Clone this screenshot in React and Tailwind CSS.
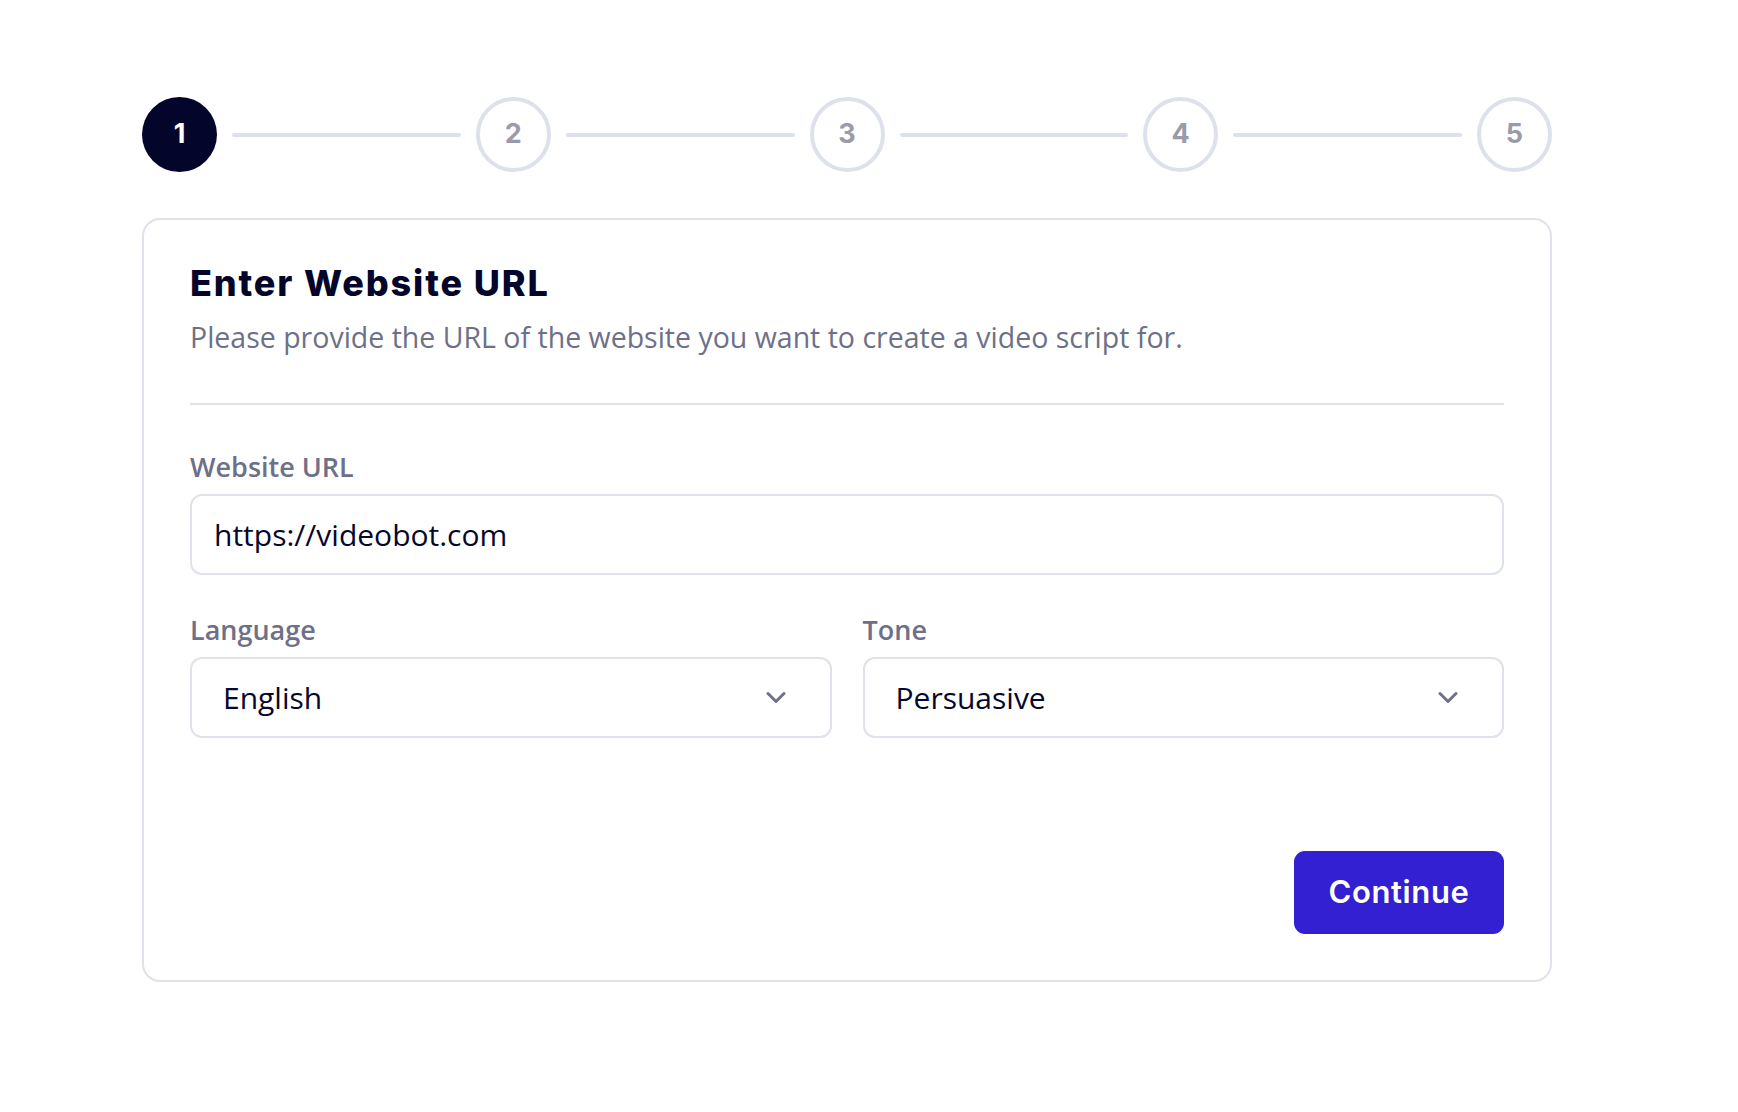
import React from "react";

const Chevron = () => (
  <svg width="20" height="13" viewBox="0 0 20 13" fill="none" className="shrink-0">
    <path d="M2 2.5 L10 10.5 L18 2.5" stroke="#6e7189" strokeWidth="3" strokeLinecap="round" strokeLinejoin="round" />
  </svg>
);

function Step({ n, active }) {
  return active ? (
    <div className="w-[75px] h-[75px] rounded-full bg-[#03052a] flex items-center justify-center shrink-0">
      <span className="text-white text-[27px] font-bold font-['Inter',sans-serif]">{n}</span>
    </div>
  ) : (
    <div className="w-[75px] h-[75px] rounded-full border-[4px] border-[#dde1ea] bg-white flex items-center justify-center shrink-0">
      <span className="text-[#9a9aab] text-[27px] font-bold font-['Inter',sans-serif]">{n}</span>
    </div>
  );
}

export default function App() {
  const steps = [1, 2, 3, 4, 5];
  return (
    <div className="min-h-screen bg-white font-['Open_Sans',sans-serif]">
      <div className="ml-[142px] w-[1410px] pt-[97px]">
        <div className="flex items-center">
          {steps.map((n, i) => (
            <React.Fragment key={n}>
              <Step n={n} active={n === 1} />
              {i < steps.length - 1 && <div className="flex-1 h-[4px] mx-[15px] bg-[#dde1ea] rounded-full" />}
            </React.Fragment>
          ))}
        </div>

        <div className="mt-[46px] border-2 border-[#dfe2eb] rounded-[18px] pt-[42px] pb-[46px] px-[46px]">
          <h1 className="font-['Inter',sans-serif] font-extrabold text-[36px] leading-[1.2] text-[#03052a] tracking-[0.052em]">
            Enter Website URL
          </h1>
          <p className="mt-[11px] text-[28.5px] leading-[42px] text-[#6d7088]">
            Please provide the URL of the website you want to create a video script for.
          </p>
          <div className="mt-[45px] h-[2px] bg-[#dfe2eb]" />

          <label className="block mt-[41px] text-[27px] leading-[42px] font-semibold text-[#6d7088]">Website URL</label>
          <div className="mt-[6px] h-[81px] border-2 border-[#dfe2eb] rounded-[12px] flex items-center pl-[22px]">
            <span className="text-[30px] text-[#05082b]">https://videobot.com</span>
          </div>

          <div className="mt-[34px] grid grid-cols-2 gap-[31px]">
            <div>
              <label className="block text-[27px] leading-[42px] font-semibold text-[#6d7088]">Language</label>
              <div className="mt-[6px] h-[81px] border-2 border-[#dfe2eb] rounded-[12px] flex items-center justify-between pl-[31px] pr-[44px]">
                <span className="text-[30px] text-[#05082b]">English</span>
                <Chevron />
              </div>
            </div>
            <div>
              <label className="block text-[27px] leading-[42px] font-semibold text-[#6d7088]">Tone</label>
              <div className="mt-[6px] h-[81px] border-2 border-[#dfe2eb] rounded-[12px] flex items-center justify-between pl-[31px] pr-[44px]">
                <span className="text-[30px] text-[#05082b]">Persuasive</span>
                <Chevron />
              </div>
            </div>
          </div>

          <div className="mt-[113px] flex justify-end">
            <button className="w-[210px] h-[83px] rounded-[11px] bg-[#3220d2] text-white font-['Inter',sans-serif] font-semibold text-[31px] tracking-[0.02em]">
              Continue
            </button>
          </div>
        </div>
      </div>
    </div>
  );
}
